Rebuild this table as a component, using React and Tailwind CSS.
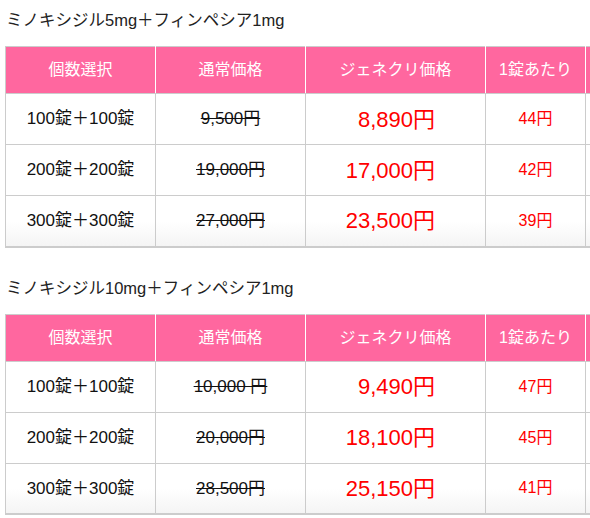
import React from 'react';

const tables = [
  {
    title: 'ミノキシジル5mg＋フィンペシア1mg',
    rows: [
      { qty: '100錠＋100錠', regular: '9,500円', price: '8,890円', per: '44円' },
      { qty: '200錠＋200錠', regular: '19,000円', price: '17,000円', per: '42円' },
      { qty: '300錠＋300錠', regular: '27,000円', price: '23,500円', per: '39円' },
    ],
  },
  {
    title: 'ミノキシジル10mg＋フィンペシア1mg',
    rows: [
      { qty: '100錠＋100錠', regular: '10,000 円', price: '9,490円', per: '47円' },
      { qty: '200錠＋200錠', regular: '20,000円', price: '18,100円', per: '45円' },
      { qty: '300錠＋300錠', regular: '28,500円', price: '25,150円', per: '41円' },
    ],
  },
];

const font = { fontFamily: '"Liberation Sans", "Noto Sans CJK JP", sans-serif' };

const PriceTable = ({ title, rows }) => (
  <section>
    <h2 className="pl-[6px] h-[40px] leading-[40px] text-[16.5px] text-[#222]">{title}</h2>
    <div className="pl-[5px] pt-[6px]">
      <table className="w-[700px] border-collapse table-fixed border-b-2 border-[#ccc]">
        <colgroup>
          <col className="w-[150px]" />
          <col className="w-[150px]" />
          <col className="w-[180px]" />
          <col className="w-[100px]" />
          <col className="w-[120px]" />
        </colgroup>
        <thead>
          <tr className="bg-[#ff679f] text-white text-[16px] h-[47px]">
            <th className="font-normal border border-[#ccc] border-r-white">個数選択</th>
            <th className="font-normal border border-[#ccc] border-x-white">通常価格</th>
            <th className="font-normal border border-[#ccc] border-x-white">ジェネクリ価格</th>
            <th className="font-normal border border-[#ccc] border-x-white">1錠あたり</th>
            <th className="font-normal border border-[#ccc] border-l-white">&nbsp;</th>
          </tr>
        </thead>
        <tbody>
          {rows.map((r, i) => (
            <tr
              key={r.qty}
              className={`h-[51px] ${i === rows.length - 1 ? 'bg-gradient-to-b from-white from-50% to-[#f4f4f4]' : 'bg-white'}`}
            >
              <td className="border border-[#ccc] text-center text-[17px] text-[#111]">{r.qty}</td>
              <td className="border border-[#ccc] text-center text-[17px] text-[#111] line-through">{r.regular}</td>
              <td className="border border-[#ccc] text-right pr-[50px] text-[22px] text-[#ff0000]">{r.price}</td>
              <td className="border border-[#ccc] text-center text-[16px] text-[#ff0000]">{r.per}</td>
              <td className="border border-[#ccc]"></td>
            </tr>
          ))}
        </tbody>
      </table>
    </div>
  </section>
);

export default function App() {
  return (
    <div className="w-[590px] h-[518px] overflow-hidden bg-white" style={font}>
      <PriceTable {...tables[0]} />
      <div className="h-[20px]" />
      <PriceTable {...tables[1]} />
    </div>
  );
}
